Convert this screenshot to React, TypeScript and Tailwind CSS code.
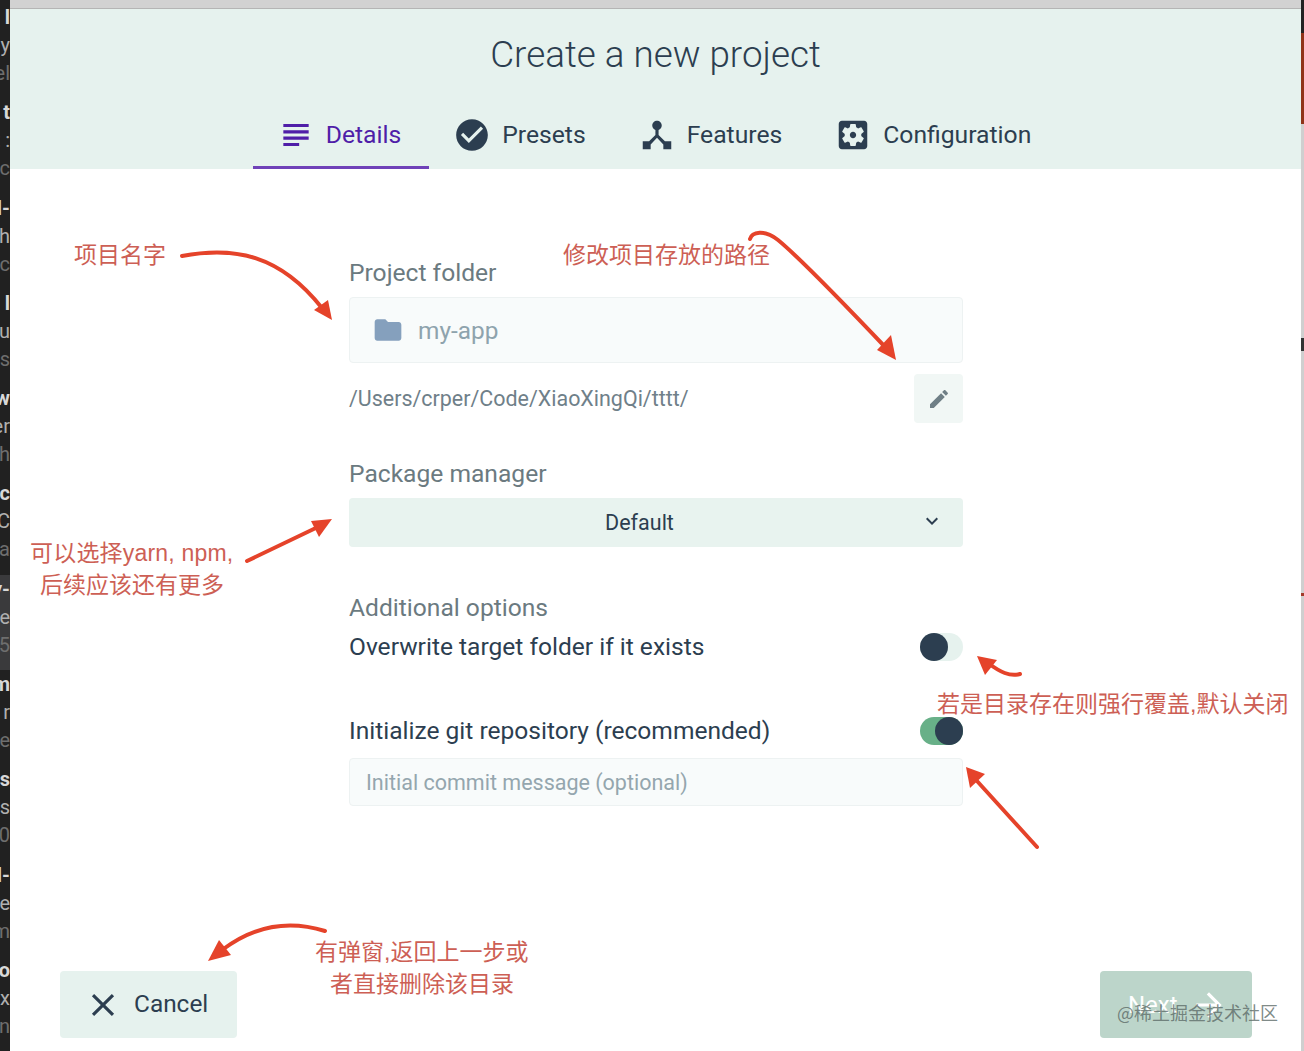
const sidebarGroups = [
  ["l", "y", "el"],
  ["t", "t :", "cc"],
  ["l-", "sh", "nc"],
  ["l", "su", "is"],
  ["w", "er", "ch"],
  ["oc", "C", "a"],
  ["y-", "e", "25"],
  ["m", "r", "e"],
  ["s", "s", "0"],
  ["l-", "e", "m"],
  ["lo", "x", "n"],
]

function Icon({ d, className }: { d: string; className: string }) {
  return (
    <svg viewBox="0 0 24 24" fill="currentColor" className={className}>
      <path d={d} />
    </svg>
  )
}

const icons = {
  subject: "M14 17H4v2h10v-2zm6-8H4v2h16V9zM4 15h16v-2H4v2zM4 5v2h16V5H4z",
  check: "M12 2C6.48 2 2 6.48 2 12s4.48 10 10 10 10-4.48 10-10S17.52 2 12 2zm-2 15l-5-5 1.41-1.41L10 14.17l7.59-7.59L19 8l-9 9z",
  hub: "M17 16l-4-4V8.82C14.16 8.4 15 7.3 15 6c0-1.66-1.34-3-3-3S9 4.34 9 6c0 1.3.84 2.4 2 2.82V12l-4 4H3v5h5v-3.05l4-4.2 4 4.2V21h5v-5h-4z",
  settings: "M12 10c-1.1 0-2 .9-2 2s.9 2 2 2 2-.9 2-2-.9-2-2-2zm7-7H5c-1.11 0-2 .9-2 2v14c0 1.1.89 2 2 2h14c1.11 0 2-.9 2-2V5c0-1.1-.89-2-2-2zm-1.75 9c0 .23-.02.46-.05.68l1.48 1.16c.13.11.17.3.08.45l-1.4 2.42c-.09.15-.27.21-.43.15l-1.74-.7c-.36.28-.76.51-1.18.69l-.26 1.85c-.03.17-.18.3-.35.3h-2.8c-.17 0-.32-.13-.35-.29l-.26-1.85c-.43-.18-.82-.41-1.18-.69l-1.74.7c-.16.06-.34 0-.43-.15l-1.4-2.42c-.09-.15-.05-.34.08-.45l1.48-1.16c-.03-.23-.05-.46-.05-.69 0-.23.02-.46.05-.68l-1.48-1.16c-.13-.11-.17-.3-.08-.45l1.4-2.42c.09-.15.27-.21.43-.15l1.74.7c.36-.28.76-.51 1.18-.69l.26-1.85c.03-.17.18-.3.35-.3h2.8c.17 0 .32.13.35.29l.26 1.85c.43.18.82.41 1.18.69l1.74-.7c.16-.06.34 0 .43.15l1.4 2.42c.09.15.05.34-.08.45l-1.48 1.16c.03.23.05.46.05.69z",
  folder: "M10 4H4c-1.1 0-1.99.9-1.99 2L2 18c0 1.1.9 2 2 2h16c1.1 0 2-.9 2-2V8c0-1.1-.9-2-2-2h-8l-2-2z",
  edit: "M3 17.25V21h3.75L17.81 9.94l-3.75-3.75L3 17.25zM20.71 7.04c.39-.39.39-1.02 0-1.41l-2.34-2.34c-.39-.39-1.02-.39-1.41 0l-1.83 1.83 3.75 3.75 1.83-1.83z",
  close: "M19 6.41L17.59 5 12 10.59 6.41 5 5 6.41 10.59 12 5 17.59 6.41 19 12 13.41 17.59 19 19 17.59 13.41 12z",
  arrow: "M12 4l-1.41 1.41L16.17 11H4v2h12.17l-5.58 5.59L12 20l8-8z",
  chevron: "M7.41 8.59L12 13.17l4.59-4.58L18 10l-6 6-6-6z",
}

const tabs = [
  { label: "Details", icon: icons.subject, active: true },
  { label: "Presets", icon: icons.check },
  { label: "Features", icon: icons.hub },
  { label: "Configuration", icon: icons.settings },
]

const notes = [
  { text: "项目名字", cls: "left-[74px] top-[238px]" },
  { text: "修改项目存放的路径", cls: "left-[563px] top-[238px]" },
  { text: "可以选择yarn, npm,", cls: "left-[30px] top-[536px] tracking-[0.2px]" },
  { text: "后续应该还有更多", cls: "left-[40px] top-[568px]" },
  { text: "若是目录存在则强行覆盖,默认关闭", cls: "left-[937px] top-[687px]" },
  { text: "有弹窗,返回上一步或", cls: "left-[315px] top-[935px]" },
  { text: "者直接删除该目录", cls: "left-[330px] top-[967px]" },
]

function Toggle({ on }: { on?: boolean }) {
  return (
    <div className={`flex h-7 w-[43px] rounded-full ${on ? "justify-end bg-[#68b088]" : "justify-start bg-[#e6f2ee]"}`}>
      <div className="h-7 w-7 rounded-full bg-[#2c3e50]" />
    </div>
  )
}

function Arrows() {
  return (
    <svg viewBox="0 0 1304 1051" className="pointer-events-none absolute left-0 top-0 h-[1051px] w-[1304px]" fill="none" stroke="#e5432a" strokeWidth="4" strokeLinecap="round">
      <path d="M182 256C235 246 280 255 322 308" />
      <path d="M332 320L314 310L328 300Z" fill="#e5432a" stroke="none" />
      <path d="M750 239C752 232 764 229 778 240C800 258 850 310 888 350" />
      <path d="M896 360L877 350L891 335Z" fill="#e5432a" stroke="none" />
      <path d="M247 561L320 526" />
      <path d="M332 519L319 537L311 521Z" fill="#e5432a" stroke="none" />
      <path d="M1020 674C1010 677 1000 672 988 663" />
      <path d="M977 656L997 660L985 675Z" fill="#e5432a" stroke="none" />
      <path d="M1037 847L977 781" />
      <path d="M966 767L985 774L970 788Z" fill="#e5432a" stroke="none" />
      <path d="M325 931C290 920 255 925 222 950" />
      <path d="M208 961L219 940L231 955Z" fill="#e5432a" stroke="none" />
    </svg>
  )
}

export default function App() {
  return (
    <div className="relative flex h-[1051px] w-[1304px] overflow-hidden bg-white font-['Roboto',sans-serif] text-[#2c3e50]">
      {/* terminal peeking out behind the dialog */}
      <div className="flex w-[10px] shrink-0 flex-col overflow-hidden bg-[#212121] pt-[3px] text-[20px]">
        {sidebarGroups.map((group, i) => (
          <div key={i} className={`h-[95.3px] w-[10px] shrink-0 ${i === 6 ? "bg-[#3a3a3c]" : ""}`}>
            {group.map((t, j) => (
              <div key={j} className={`flex h-[28px] w-[10px] justify-end whitespace-nowrap leading-[28px] ${j === 0 ? "font-bold text-[#d8d8d8]" : j === 1 ? "text-[#b0b0b0]" : "text-[#6e6e6e]"}`}>
                {t}
              </div>
            ))}
          </div>
        ))}
      </div>

      <div className="flex h-full min-w-0 flex-1 flex-col">
        <div className="h-[9px] shrink-0 border-b border-[#b5b5b5] bg-[#d2d2d2]" />
        <div className="shrink-0 bg-[#e6f2ee]">
          <div className="flex h-[92px] items-center justify-center text-[36.8px] font-light text-[#2c3e50]">Create a new project</div>
          <div className="flex h-[68px] justify-center pl-[1px]">
            {tabs.map((t) => (
              <div key={t.label} className={`flex items-center gap-[11px] border-b-[3px] pl-6 pr-7 pt-[3px] text-[24.7px] ${t.active ? "border-[#6f42b8] text-[#4f1ea8]" : "border-transparent"}`}>
                <Icon d={t.icon} className="h-[38px] w-[38px]" />
                <span>{t.label}</span>
              </div>
            ))}
          </div>
        </div>

        <div className="ml-[339px] w-[614px]">
          <div className="mt-[89px] text-[24.6px] leading-[30px] text-[#6b7a80]">Project folder</div>
          <div className="mt-[9px] flex h-[66px] items-center rounded border border-[#edf2f2] bg-[#f8fbfb] pl-[22px]">
            <Icon d={icons.folder} className="h-[32px] w-[32px] text-[#85a0bd]" />
            <span className="ml-[14px] pt-[2px] text-[24.4px] text-[#8ea3ad]">my-app</span>
          </div>
          <div className="mt-[11px] flex items-center justify-between">
            <span className="pt-[2px] text-[21.45px] text-[#6f8089]">/Users/crper/Code/XiaoXingQi/tttt/</span>
            <div className="flex h-[49px] w-[49px] items-center justify-center rounded bg-[#f1f7f5]">
              <Icon d={icons.edit} className="h-6 w-6 text-[#6f7f86]" />
            </div>
          </div>
          <div className="mt-[36px] text-[24.6px] leading-[30px] text-[#6b7a80]">Package manager</div>
          <div className="relative mt-[9px] flex h-[49px] items-center justify-center rounded bg-[#e8f3ef] pr-[33px] pt-[2px] text-[21.5px]">
            Default
            <Icon d={icons.chevron} className="absolute right-[19px] top-[11px] h-6 w-6 text-[#2c3e50]" />
          </div>
          <div className="mt-[46px] text-[24.6px] leading-[30px] text-[#6b7a80]">Additional options</div>
          <div className="mt-[10px] flex h-7 items-center justify-between text-[24.55px]">
            <span>Overwrite target folder if it exists</span>
            <Toggle />
          </div>
          <div className="mt-[56px] flex h-7 items-center justify-between text-[24.55px]">
            <span>Initialize git repository (recommended)</span>
            <Toggle on />
          </div>
          <div className="mt-[13px] flex h-[48px] items-center rounded border border-[#edf2f2] bg-[#f8fbfb] pl-4 pt-[2px] text-[21.5px] text-[#94a6ae]">
            Initial commit message (optional)
          </div>
        </div>

        <div className="mt-auto mb-[13px] flex justify-between pl-[50px] pr-[49px]">
          <div className="flex h-[67px] w-[177px] items-center rounded bg-[#e6f2ee] pl-[28px] text-[24.4px]">
            <Icon d={icons.close} className="h-[38px] w-[38px] -ml-[4px] -mr-[4px]" />
            <span className="ml-[16px] -mt-[1px]">Cancel</span>
          </div>
          <div className="flex h-[67px] w-[152px] items-center rounded bg-[#bcd5ca] pl-[28px] text-2xl text-white">
            <span>Next</span>
            <Icon d={icons.arrow} className="ml-[12px] h-[38px] w-[38px]" />
          </div>
        </div>
      </div>

      <div className="flex w-[3px] shrink-0 flex-col bg-[#cfcfcf]">
        <div className="h-[33px] bg-[#222222]" />
        <div className="h-[91px] bg-[#8f3318]" />
        <div className="mt-[214px] h-[13px] bg-[#333333]" />
        <div className="mt-[242px] h-[3px] bg-[#a33a2a]" />
      </div>

      <Arrows />
      {notes.map((n) => (
        <div key={n.text} className={`absolute whitespace-nowrap font-['Liberation_Sans','Noto_Sans_CJK_SC',sans-serif] text-[23px] leading-[34px] text-[#cd5f55] ${n.cls}`}>
          {n.text}
        </div>
      ))}
      <div className="absolute left-[1117px] top-[999px] whitespace-nowrap font-['Noto_Sans_CJK_SC',sans-serif] text-[18px] leading-[26px] text-[#5d6b68]/80">
        @稀土掘金技术社区
      </div>
    </div>
  )
}
